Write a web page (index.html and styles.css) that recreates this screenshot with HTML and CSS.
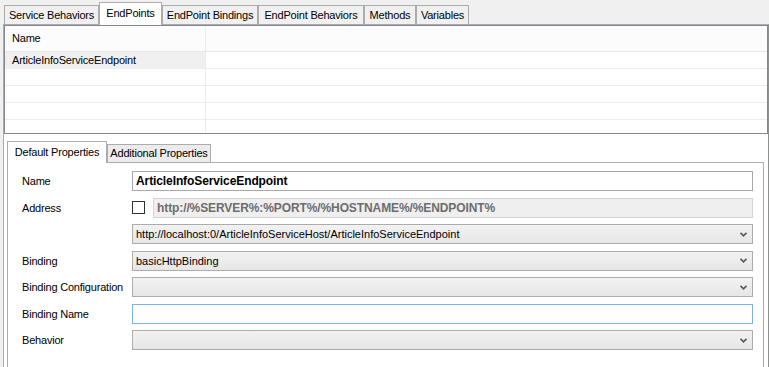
FILE: index.html
```html
<!DOCTYPE html>
<html>
<head>
<meta charset="utf-8">
<link rel="stylesheet" href="styles.css">
</head>
<body>
<div class="top-tabs">
  <div class="tab w-sb">Service Behaviors</div>
  <div class="tab sel w-ep">EndPoints</div>
  <div class="tab w-ebi">EndPoint Bindings</div>
  <div class="tab w-ebe">EndPoint Behaviors</div>
  <div class="tab w-me">Methods</div>
  <div class="tab w-va">Variables</div>
</div>
<div class="page">
  <div class="grid">
    <div class="grow head"><div class="c1">Name</div><div class="c2"></div></div>
    <div class="grow"><div class="c1 cur">ArticleInfoServiceEndpoint</div><div class="c2"></div></div>
    <div class="grow"><div class="c1"></div><div class="c2"></div></div>
    <div class="grow"><div class="c1"></div><div class="c2"></div></div>
    <div class="grow"><div class="c1"></div><div class="c2"></div></div>
    <div class="grow last"><div class="c1"></div><div class="c2"></div></div>
  </div>
  <div class="lower">
    <div class="lower-tabs">
      <div class="ltab sel w-dp">Default Properties</div>
      <div class="ltab w-ap">Additional Properties</div>
    </div>
    <div class="tabpage">
      <div class="form">
        <div class="lbl">Name</div>
        <div class="field text bold">ArticleInfoServiceEndpoint</div>

        <div class="lbl">Address</div>
        <div class="addr">
          <div class="check"></div>
          <div class="field text disabled bold">http://%SERVER%:%PORT%/%HOSTNAME%/%ENDPOINT%</div>
        </div>

        <div class="lbl"></div>
        <div class="field combo"><span class="val">http://localhost:0/ArticleInfoServiceHost/ArticleInfoServiceEndpoint</span><svg class="chev" width="7" height="5" viewBox="0 0 7 5"><path d="M0.5 0.8 L3.5 3.8 L6.5 0.8" fill="none" stroke="#5a5a5a" stroke-width="1.7"/></svg></div>

        <div class="lbl">Binding</div>
        <div class="field combo"><span class="val">basicHttpBinding</span><svg class="chev" width="7" height="5" viewBox="0 0 7 5"><path d="M0.5 0.8 L3.5 3.8 L6.5 0.8" fill="none" stroke="#5a5a5a" stroke-width="1.7"/></svg></div>

        <div class="lbl">Binding Configuration</div>
        <div class="field combo"><span class="val"></span><svg class="chev" width="7" height="5" viewBox="0 0 7 5"><path d="M0.5 0.8 L3.5 3.8 L6.5 0.8" fill="none" stroke="#5a5a5a" stroke-width="1.7"/></svg></div>

        <div class="lbl">Binding Name</div>
        <div class="field text focus"></div>

        <div class="lbl">Behavior</div>
        <div class="field combo"><span class="val"></span><svg class="chev" width="7" height="5" viewBox="0 0 7 5"><path d="M0.5 0.8 L3.5 3.8 L6.5 0.8" fill="none" stroke="#5a5a5a" stroke-width="1.7"/></svg></div>
      </div>
    </div>
  </div>
</div>
</body>
</html>
```
FILE: styles.css
```css
* { box-sizing: border-box; }
html, body { margin: 0; padding: 0; }
body {
  background: #f0f0f0;
  font-family: "Liberation Sans", Arial, sans-serif;
  font-size: 11px;
  letter-spacing: -0.2px;
  color: #000;
  width: 769px;
  height: 367px;
  overflow: hidden;
}
.top-tabs {
  display: flex;
  align-items: flex-end;
  height: 24px;
  padding-left: 4px;
  position: relative;
  z-index: 2;
}
.tab {
  height: 19px;
  border: 1px solid #acacac;
  border-bottom: 0;
  background: #f0f0f0;
  text-align: center;
  line-height: 18px;
  white-space: nowrap;
}
.tab.sel {
  height: 23px;
  background: #fff;
  margin-bottom: -1px;
  line-height: 21px;
  padding-bottom: 1px;
}
.w-sb { width: 95px; }
.w-ep { width: 63px; }
.w-ebi { width: 96px; }
.w-ebe { width: 106px; }
.w-me { width: 52px; }
.w-va { width: 53px; }

.page {
  margin-left: 3px;
  width: 766px;
  height: 360px;
  border: 1px solid #acacac;
  border-right-color: #8e8f8f;
  background: #fff;
}
.grid {
  width: 764px;
  height: 109px;
  border: 1px solid #828790;
  background: #fff;
  overflow: hidden;
}
.grow {
  display: flex;
  height: 17px;
  border-bottom: 1px solid #ededed;
}
.grow.head {
  height: 26px;
  background: #fcfcfc;
  border-bottom-color: #e6e6e6;
}
.grow.last { border-bottom: 0; }
.c1 {
  width: 201px;
  border-right: 1px solid #ededed;
  padding-left: 7px;
  line-height: 16px;
  white-space: nowrap;
}
.head .c1 { line-height: 25px; border-right-color: #ececec; }
.c1.cur { background: #f0f0f0; }
.c2 { flex: 1; }

.lower { padding: 7px 0 0 3px; }
.lower-tabs {
  display: flex;
  align-items: flex-end;
  height: 21px;
  position: relative;
  z-index: 2;
}
.ltab {
  height: 18px;
  border: 1px solid #acacac;
  border-bottom: 0;
  background: #ececec;
  text-align: center;
  line-height: 17px;
  white-space: nowrap;
}
.ltab.sel {
  height: 22px;
  background: #fff;
  margin-bottom: -1px;
  line-height: 20px;
  padding-bottom: 1px;
}
.w-dp { width: 100px; }
.w-ap { width: 104px; }

.tabpage {
  width: 757px;
  height: 220px;
  border: 1px solid #acacac;
  background: #fff;
  padding: 8px 10px 0 14px;
}
.form {
  display: grid;
  grid-template-columns: 110px 621px;
  grid-auto-rows: 20px;
  row-gap: 6.5px;
}
.lbl {
  line-height: 20px;
  white-space: nowrap;
}
.field {
  height: 20px;
  border: 1px solid #acacac;
  white-space: nowrap;
  overflow: hidden;
}
.text {
  background: #fff;
  border-color: #a8a8a8;
  padding-left: 3px;
  line-height: 18px;
}
.bold {
  font-weight: bold;
  font-size: 12px;
  letter-spacing: -0.1px;
}
.text.disabled {
  background: #efefef;
  border-color: #d4d4d4;
  color: #6d6d6d;
  flex: 1;
}
.text.focus { border-color: #7eb4ea; }
.addr {
  display: flex;
  align-items: center;
  gap: 8px;
}
.check {
  width: 13px;
  height: 13px;
  border: 1px solid #333;
  background: #fff;
  flex: none;
}
.combo {
  display: flex;
  align-items: center;
  justify-content: space-between;
  background: linear-gradient(#f2f2f2, #e6e6e6);
  padding: 0 4px 0 3px;
  line-height: 18px;
  letter-spacing: 0;
}
.chev { flex: none; margin-right: 1px; }
```
